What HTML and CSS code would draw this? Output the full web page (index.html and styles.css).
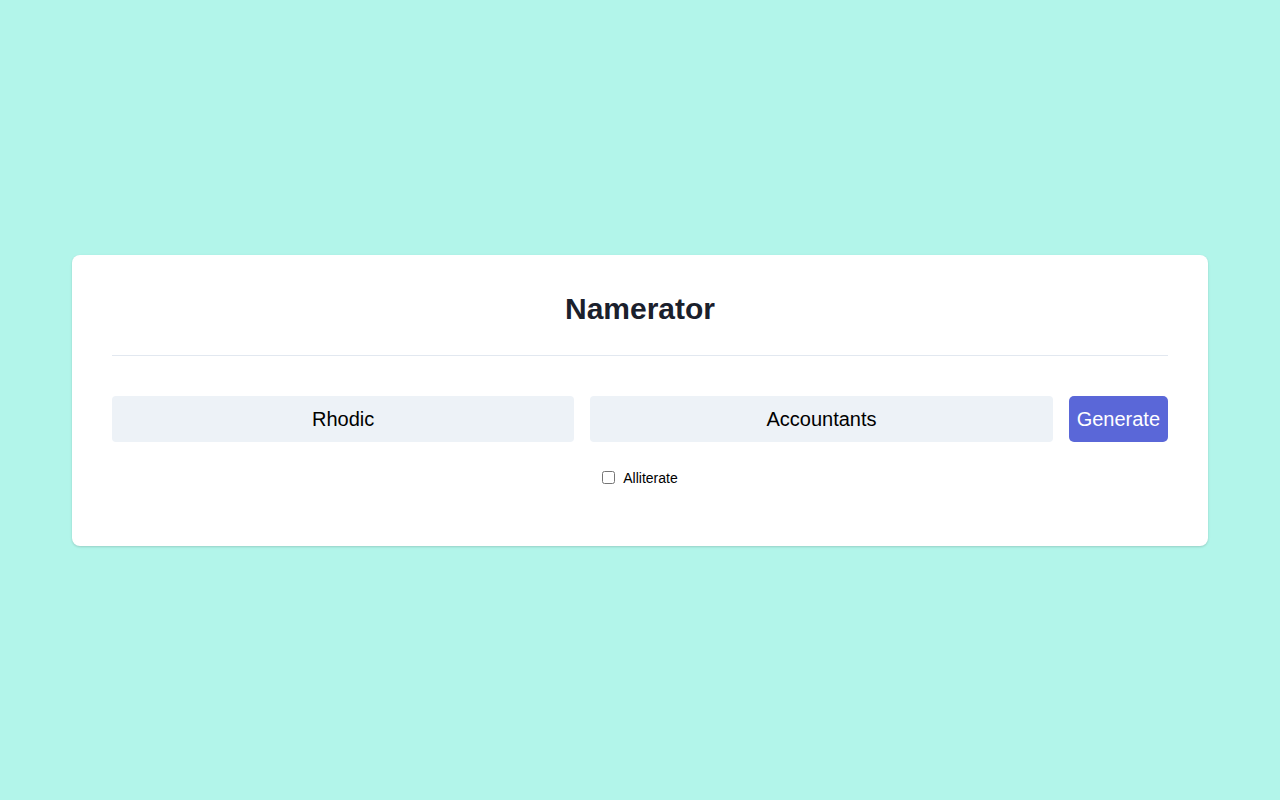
FILE: index.html
```html
<!DOCTYPE html>
<html lang="en">
<head>
<meta charset="utf-8">
<title>Namerator</title>
<link rel="stylesheet" href="styles.css">
</head>
<body>
<main class="page">
  <section class="card">
    <h1 class="title">Namerator</h1>
    <hr class="divider">
    <div class="controls">
      <input class="field" type="text" value="Rhodic">
      <input class="field" type="text" value="Accountants">
      <button class="generate" type="button">Generate</button>
    </div>
    <label class="option">
      <input class="check" type="checkbox">
      <span class="option-text">Alliterate</span>
    </label>
  </section>
</main>
</body>
</html>
```

FILE: styles.css
```css
* { box-sizing: border-box; }
html, body {
  margin: 0;
  height: 100%;
}
body {
  background: #b2f5ea;
  font-family: "Liberation Sans", Arial, sans-serif;
  color: #000;
}
.page {
  min-height: 100vh;
  display: flex;
  align-items: center;
  justify-content: center;
  padding: 0 72px;
}
.card {
  width: 100%;
  background: #fff;
  border-radius: 8px;
  box-shadow: 0 1px 3px rgba(0,0,0,0.1), 0 1px 2px rgba(0,0,0,0.06);
  padding: 36px 40px 40px;
  display: flex;
  flex-direction: column;
}
.title {
  margin: 0 0 28px;
  font-size: 30px;
  line-height: 36px;
  font-weight: 700;
  text-align: center;
  color: #1a202c;
}
.divider {
  margin: 0 0 40px;
  border: 0;
  border-top: 1px solid #e2e8f0;
  height: 0;
}
.controls {
  display: flex;
  gap: 16px;
  align-items: stretch;
}
.field {
  flex: 1 1 0;
  min-width: 0;
  height: 46px;
  border: 0;
  border-radius: 4px;
  background: #edf2f7;
  font-family: inherit;
  font-size: 20px;
  color: #000;
  text-align: center;
  padding: 2px 12px 0;
  outline: none;
}
.generate {
  flex: 0 0 auto;
  height: 46px;
  border: 0;
  border-radius: 5px;
  background: #5a67d8;
  color: #fff;
  font-family: inherit;
  font-size: 20px;
  padding: 2px 8px 0;
  cursor: pointer;
}
.option {
  align-self: center;
  display: flex;
  align-items: center;
  margin: 24px 0 16px;
  height: 24px;
  font-size: 14px;
}
.check {
  width: 13px;
  height: 13px;
  margin: 0 8px 0 0;
}
.option-text {
  line-height: 20px;
}
```
